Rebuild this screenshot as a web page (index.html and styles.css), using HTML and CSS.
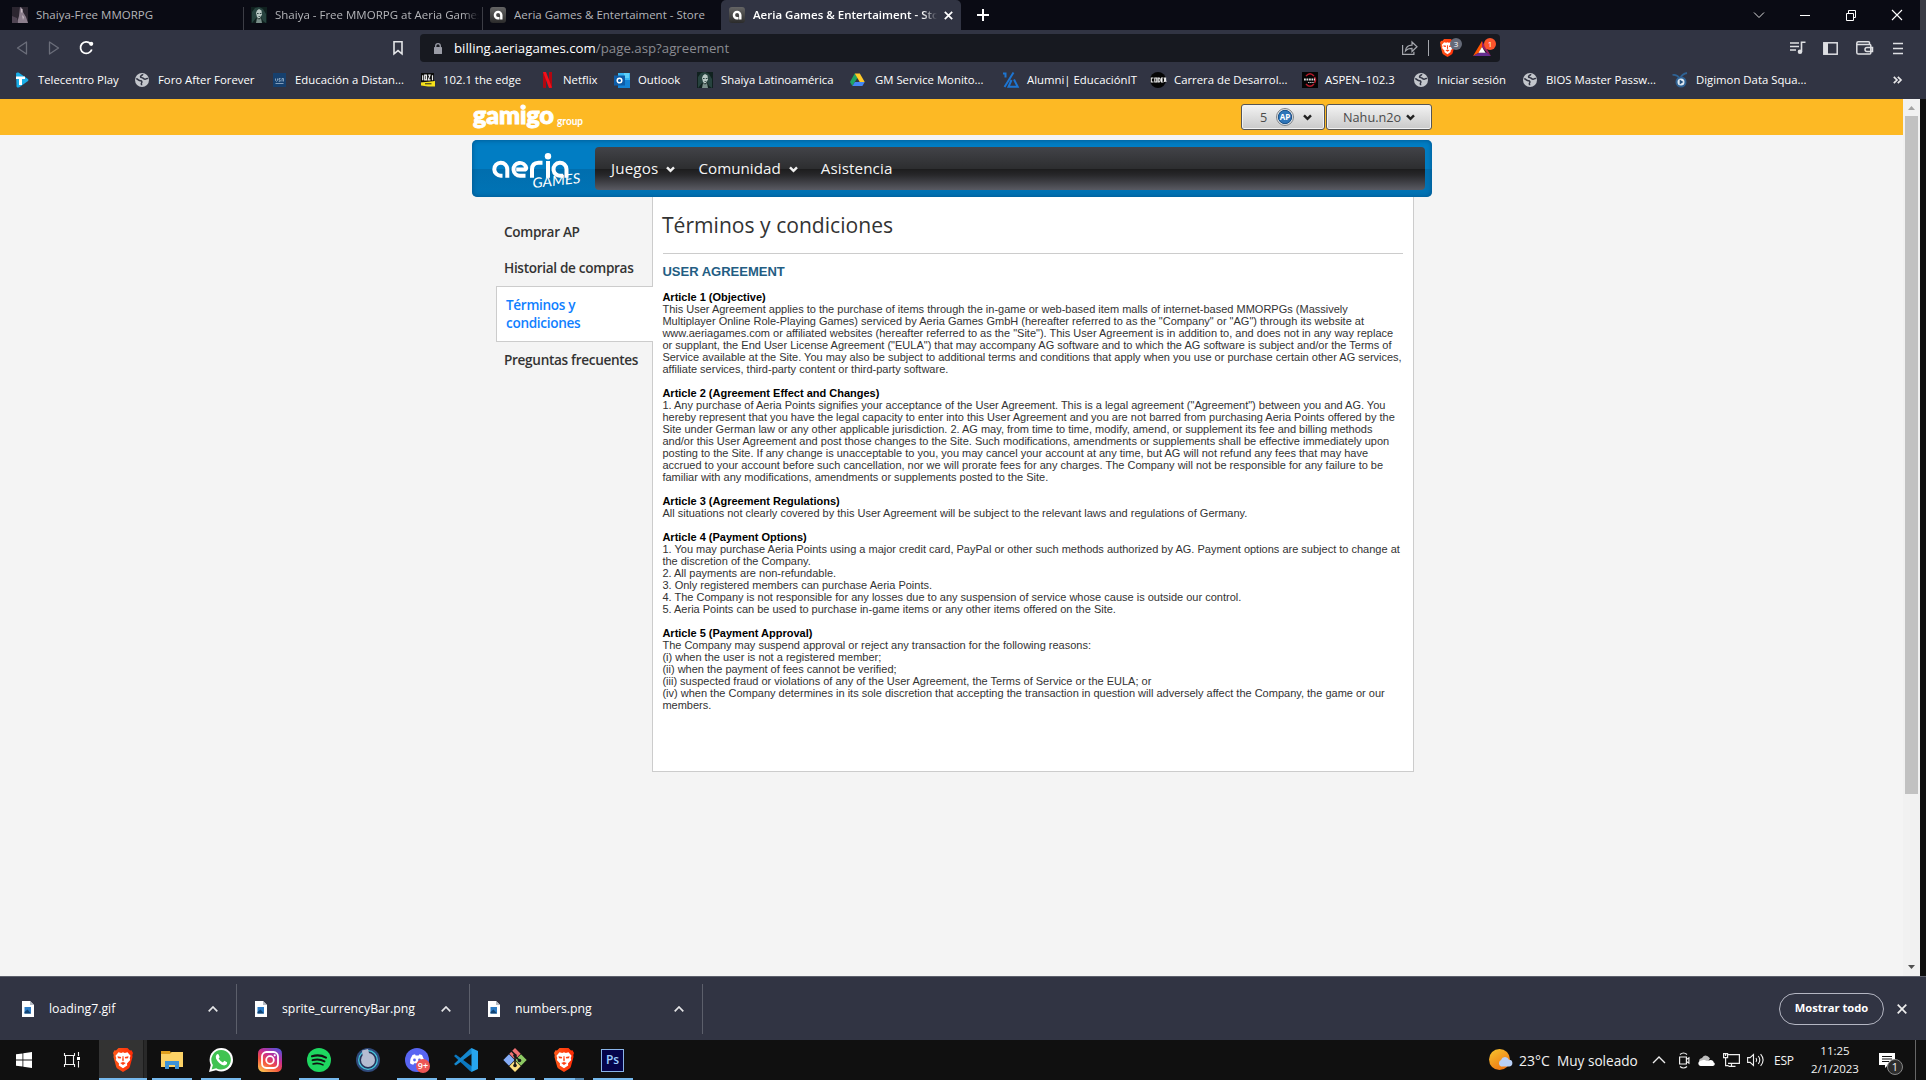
FILE: index.html
```html
<!DOCTYPE html>
<html lang="es">
<head>
<meta charset="utf-8">
<title>Aeria Games &amp; Entertaiment - Store</title>
<link rel="stylesheet" href="styles.css">
</head>
<body>
<svg class="defs" width="0" height="0" aria-hidden="true">
  <defs>
    <linearGradient id="gBrave" x1="0" x2="1"><stop offset="0" stop-color="#ff5a1a"/><stop offset="1" stop-color="#ff2a05"/></linearGradient>
    <linearGradient id="gInsta" x1="0.2" y1="1" x2="0.8" y2="0"><stop offset="0" stop-color="#fdc04f"/><stop offset=".35" stop-color="#f3503f"/><stop offset=".65" stop-color="#c52d93"/><stop offset="1" stop-color="#5a51d8"/></linearGradient>
    <linearGradient id="gSun" x1="0" y1="0" x2=".6" y2="1"><stop offset="0" stop-color="#f6c52f"/><stop offset="1" stop-color="#f07812"/></linearGradient>
    <linearGradient id="gTile" x2="0" y2="1"><stop offset="0" stop-color="#656565"/><stop offset="1" stop-color="#2b2b2b"/></linearGradient>
    <symbol id="brave" viewBox="0 0 20 24">
      <path fill="url(#gBrave)" d="M5.500 0h9l2.500 2.500 1.500-.2L20 5l-.7 2 .2 2-2.600 9.500q-.4 1.500-2 2.600L10 24l-4.900-2.900q-1.600-1.100-2-2.600L.5 9l.2-2L0 5l1.500-2.700 1.500.2z"/>
      <path fill="#fff" d="M5.500 4.200l2.700.7L10 4.300l1.800.6 2.700-.7 3 3.600-.8 2.200.5 2-3.200 3.600.2 1.800L10 20.200l-4.200-2.800.2-1.800L2.800 12l.5-2-.8-2.200z"/>
      <path fill="#ff4013" d="M4.500 8.200l3.700.8-.5 1.600-2.700-.4zM15.500 8.200l-3.700.8.5 1.600 2.700-.4zM9.600 8h.8l.4 4-.4 1.300h-.8L9.200 12zM7.200 15L10 13.900l2.800 1.100-2.800 2z"/>
    </symbol>
    <symbol id="globe" viewBox="0 0 14 14">
      <circle cx="7" cy="7" r="7" fill="#c3c6cc"/>
      <path fill="none" stroke="#313443" stroke-width="1.500" d="M1.200 5.800c2 .2 2.300 2 4.300 2 1.800 0 1.500 1.500 1 2.200-.6.700.2 1.500.2 2.300M7.800 1.200c-.2 1.500-2.500 1.200-2.300 2.600.2 1 1.600.6 2.500 1.300.8.700 2 1.600 3 .8.700-.6 1.500-.5 2-.3"/>
    </symbol>
    <symbol id="aeria" viewBox="0 0 16 16">
      <rect width="16" height="16" rx="3" fill="url(#gTile)"/>
      <path fill="none" stroke="#fff" stroke-width="2.400" d="M9.500 11.300H8A3.200 3.200 0 1 1 11.300 8v4.500"/>
    </symbol>
    <symbol id="portrait" viewBox="0 0 16 16">
      <rect width="16" height="16" fill="#10211f"/>
      <path fill="#27433f" d="M1 16V5l3-4 4-1 4 2 3 5v9l-3-2-2-4-5 1z"/>
      <path fill="#b9c8c4" d="M6 3.500L8 2l2.500 1.500.5 4-2 3.500-1.500.5L6 10 5 6z"/>
      <path fill="#2b4340" d="M6 6h1.600v1H6zM8.800 6h1.600v1H8.800zM7.500 9h1.800v.7H7.500z"/>
      <path fill="#798e89" d="M6 11l2 1.500L10 11l1 5H5z"/>
    </symbol>
    <symbol id="file" viewBox="0 0 12 16">
      <path fill="#fff" d="M0 0h8l4 4v12H0z"/><path fill="#b7bcc4" d="M8 0l4 4H8z"/>
      <path fill="#2d7cc5" d="M2.500 6h6.500v6.500H2.500z"/><path fill="#124474" d="M2.500 11l3-2.500 3.500 4H2.500z"/>
    </symbol>
    <symbol id="caret" viewBox="0 0 9 7"><path fill="none" stroke="currentColor" stroke-width="2.400" d="M1 1.300l3.500 3.600L8 1.300"/></symbol>
    <symbol id="up" viewBox="0 0 10 6"><path fill="none" stroke="currentColor" stroke-width="1.700" d="M.7 5.300L5 1l4.300 4.300"/></symbol>
  </defs>
</svg>

<div class="tabstrip">
  <div class="tab"><svg class="fav" viewBox="0 0 16 16"><rect width="16" height="16" fill="#2c2630"/><path fill="#8c7f8d" d="M8 0l2 1 1 4 3 5 2 6H5l2-7z"/><path fill="#504553" d="M0 9l5 2 1 5H0z"/><path fill="#c8bcc5" d="M9 2h1.500v3.500H9zM10 8l2 2-1 3z"/></svg><span>Shaiya-Free MMORPG</span></div>
  <div class="tab"><svg class="fav"><use href="#portrait"/></svg><span class="fade">Shaiya - Free MMORPG at Aeria Games</span></div>
  <div class="tab"><svg class="fav"><use href="#aeria"/></svg><span>Aeria Games &amp; Entertaiment - Store</span></div>
  <div class="tab active"><svg class="fav"><use href="#aeria"/></svg><span class="fade">Aeria Games &amp; Entertaiment - Store</span><svg class="tabx" viewBox="0 0 9 9"><path stroke="#fff" stroke-width="1.700" d="M.8.8l7.400 7.400M8.200.8L.8 8.200"/></svg></div>
  <svg class="plus" viewBox="0 0 12 12"><path stroke="#fff" stroke-width="2" d="M6 0v12M0 6h12"/></svg>
  <div class="winctl">
    <svg viewBox="0 0 12 12"><path fill="none" stroke="#ddd" d="M1 3.500l5 5 5-5"/></svg>
    <svg viewBox="0 0 12 12"><path stroke="#fff" d="M1 6.500h10"/></svg>
    <svg viewBox="0 0 12 12"><path fill="none" stroke="#fff" d="M1.500 4.500h7v7h-7zM3.500 4.500v-3h7v7h-2"/></svg>
    <svg viewBox="0 0 12 12"><path stroke="#fff" stroke-width="1.100" d="M1 1l10 10M11 1L1 11"/></svg>
  </div>
</div>

<div class="toolbar">
  <div class="navbtns">
    <svg width="12" height="16" viewBox="0 0 12 16"><path fill="none" stroke="#6b6e7a" stroke-width="1.300" stroke-linejoin="round" d="M10.500 2v12L1.500 8z"/></svg>
    <svg width="12" height="16" viewBox="0 0 12 16"><path fill="none" stroke="#6b6e7a" stroke-width="1.300" stroke-linejoin="round" d="M1.500 2v12l9-6z"/></svg>
    <svg width="15" height="16" viewBox="0 0 15 16"><path fill="none" stroke="#fff" stroke-width="1.800" d="M11.500 3.600A5.800 5.800 0 1 0 12.800 9.500"/><circle cx="12.200" cy="3.800" r="2.100" fill="#fff"/></svg>
  </div>
  <svg class="mark" viewBox="0 0 10 14"><path fill="none" stroke="#e4e5e8" stroke-width="1.600" d="M1 .8h8v12L5 9.600 1 12.800z"/></svg>
  <div class="urlbar">
    <svg class="lock" viewBox="0 0 8 11"><rect y="4" width="8" height="7" rx=".6" fill="#9a9ca6"/><path fill="none" stroke="#9a9ca6" stroke-width="1.300" d="M1.700 4.500V3a2.300 2.300 0 0 1 4.600 0v1.500"/></svg>
    <span class="url"><b>billing.aeriagames.com</b>/page.asp?agreement</span>
    <svg class="share" viewBox="0 0 16 14"><path fill="none" stroke="#a5a7ad" stroke-width="1.200" d="M.6 4v9.400h11.300v-2.600M3.500 9.800C4 6 6.500 4.200 10 4.200V1l5 4.800-5 4.700V7.400C7 7.300 5 8 3.500 9.800z"/></svg>
    <i class="sep"></i>
    <div class="shield"><svg viewBox="0 0 20 24"><use href="#brave"/></svg><em>3</em></div>
    <div class="bat"><svg viewBox="0 0 18 15"><path fill="#662d91" d="M0 15h18l-4-3.500H6z"/><path fill="#ff5500" d="M9 0L0 15l6-3.500L9 6z"/><path fill="#9e1f63" d="M9 0l9 15-4-3.500L9 6z"/><path fill="#fff" d="M9 6l3.500 5.700h-7z"/></svg><em>1</em></div>
  </div>
  <div class="tools">
    <svg width="17" height="14" viewBox="0 0 17 14"><path stroke="#dedfe3" stroke-width="1.500" d="M1 2h9M1 5.500h9M1 9h6"/><path fill="none" stroke="#dedfe3" stroke-width="1.600" d="M12.500 10.500V1.200h4"/><circle cx="11" cy="10.800" r="2.300" fill="#dedfe3"/></svg>
    <svg width="15" height="13" viewBox="0 0 15 13"><rect x=".8" y=".8" width="13.400" height="11.400" fill="none" stroke="#dedfe3" stroke-width="1.500"/><path fill="#dedfe3" d="M1 1h4v11H1z"/></svg>
    <svg width="17" height="14" viewBox="0 0 17 14"><path fill="none" stroke="#dedfe3" stroke-width="1.500" d="M13.500 3.500V1.800q0-1-1-1H2.300Q.8.800.8 2.300v9.200q0 1.600 1.600 1.600h11.400q1 0 1-1V4.600q0-1-1-1H1M16.500 6.500H11a1.900 1.900 0 0 0 0 4h5.500z"/></svg>
    <svg width="10" height="13" viewBox="0 0 10 13"><path stroke="#dedfe3" stroke-width="1.700" d="M0 1.500h10M0 6.500h10M0 11.500h10"/></svg>
  </div>
</div>

<div class="bookmarks">
  <div class="bm"><svg viewBox="0 0 16 16"><path fill="#19aee8" d="M1 1.500Q1.500 0 3.500.5L13 7q1 1 0 2L4 15.500Q1 16 1.500 13z"/><path fill="#fff" d="M1 4.500h9V7H7v6H4V7H1z"/></svg><span>Telecentro Play</span></div>
  <div class="bm"><svg class="g"><use href="#globe"/></svg><span>Foro After Forever</span></div>
  <div class="bm"><svg class="unt" viewBox="0 0 14 14"><rect width="13" height="14" fill="#16406e"/><path fill="none" stroke="#8fa9c4" stroke-width=".9" d="M2.500 5.500v2l1 .8 1-.8v-2M5.700 8.300h1.500V7H6V5.500h1.500M9 8.500v-3h1.500v3M2.500 10.500h8"/></svg><span>Educación a Distan...</span></div>
  <div class="bm"><svg class="edge" viewBox="0 0 14 14"><path fill="#0b0b0b" d="M0 0h13v9H0z"/><path fill="#f6e11a" d="M0 9.500l14-1.500v5.500H7L0 12.500z"/><path fill="none" stroke="#eee" stroke-width="1.200" d="M1.700 2.200v5M3.700 2.200h1.800v4.600H3.700zM7.200 2.200h1.800L7.300 6.800h2.200M11.500 2.200v5"/><path stroke="#222" d="M4 10.800h6.500"/></svg><span>102.1 the edge</span></div>
  <div class="bm"><svg viewBox="0 0 9 16"><path fill="#b20710" d="M0 0h3v16l-3-.3zM6 0h3v15.700L6 16z"/><path fill="#f3101b" d="M0 0h3l6 15.700L6 16z"/></svg><span>Netflix</span></div>
  <div class="bm"><svg viewBox="0 0 16 16"><path fill="#36b5f3" d="M4 1h12v8H4z"/><path fill="#1482d4" d="M4 8h12v8H4z"/><path fill="#5dd0fa" d="M10 1h5v5h-5z"/><path fill="#0e5ca8" d="M0 3.500h11v10H0z"/><circle cx="5.500" cy="8.500" r="2.300" fill="none" stroke="#fff" stroke-width="1.500"/></svg><span>Outlook</span></div>
  <div class="bm"><svg><use href="#portrait"/></svg><span>Shaiya Latinoamérica</span></div>
  <div class="bm"><svg viewBox="0 0 16 14"><path fill="#1fa463" d="M5 0L0 9l2.500 4.500L8 4.500z"/><path fill="#ffc928" d="M5 0h5.500l5.200 9h-5.300z"/><path fill="#4587f4" d="M5.200 9h10.500l-2.500 4.500H2.500z"/></svg><span>GM Service Monito...</span></div>
  <div class="bm"><svg viewBox="0 0 16 16"><path fill="none" stroke="#1d75d2" stroke-width="2" d="M10.500.5L1.500 15M0 1.500h2.500v4M8.500 8l-3 6.800h9.200L11 7.500"/></svg><span>Alumni| EducaciónIT</span></div>
  <div class="bm"><svg viewBox="0 0 16 16"><circle cx="8" cy="8" r="8" fill="#050505"/><path fill="none" stroke="#eee" stroke-width="1.100" d="M3.500 6H1.300v4h2.200M4.800 6h2v4h-2zM8.200 6h1q1 .3 1 2t-1 2h-1zM13.500 6h-2v4h2M11.500 8h1.500M14.600 10V6h1v2l.4 2"/></svg><span>Carrera de Desarrol...</span></div>
  <div class="bm"><svg viewBox="0 0 16 16"><rect width="16" height="16" fill="#050505"/><path fill="none" stroke="#b41a2a" stroke-width="1.500" d="M4 4q4-4.500 8 0M4 12q4 4.500 8 0M12.500 5q2 3 0 6"/><path stroke="#ddd" stroke-width="2" stroke-dasharray="1.800 .7" d="M2 7.500h11"/><path stroke="#bbb" stroke-dasharray="1.500 .6" d="M6 10.500h6"/></svg><span>ASPEN–102.3</span></div>
  <div class="bm"><svg class="g"><use href="#globe"/></svg><span>Iniciar sesión</span></div>
  <div class="bm"><svg class="g"><use href="#globe"/></svg><span>BIOS Master Passw...</span></div>
  <div class="bm"><svg viewBox="0 0 16 16"><path fill="none" stroke="#2f6294" stroke-width="1.800" d="M.5 3q4-1 7 3M8.500 6q1.500-4 6.500-5"/><circle cx="9" cy="10" r="4.500" fill="#dfe9f2" stroke="#2f6294" stroke-width="2"/><path fill="#24517f" d="M7.700 7.500l3.600 2.500-3.600 2.500z"/></svg><span>Digimon Data Squa...</span></div>
  <svg class="more" viewBox="0 0 9 8"><path fill="none" stroke="#e8e8ea" stroke-width="1.700" d="M.8.800L4 4 .8 7.200M4.800.800L8 4 4.800 7.200"/></svg>
</div>

<div class="viewport">
  <div class="page">
    <div class="topbar">
      <div class="topinner">
        <svg class="gamigo" width="112" height="30" viewBox="0 0 112 30"><text class="lg" x="0" y="19.500" textLength="81" lengthAdjust="spacingAndGlyphs">gamigo</text><text class="lgs" x="84" y="21" textLength="26" lengthAdjust="spacingAndGlyphs">group</text></svg>
        <div class="userbtns">
          <div class="btn points"><span>5</span><svg class="ap" viewBox="0 0 18 18"><circle cx="9" cy="9" r="8.500" fill="#e6e8ea" stroke="#808488"/><circle cx="9" cy="9" r="6.700" fill="#2e75b9" stroke="#174f86"/><text x="9" y="12" text-anchor="middle">AP</text></svg><svg class="caret"><use href="#caret"/></svg></div>
          <div class="btn user"><span>Nahu.n2o</span><svg class="caret"><use href="#caret"/></svg></div>
        </div>
      </div>
    </div>
    <div class="wrap">
      <div class="mainnav">
        <svg class="logo" width="123" height="57" viewBox="0 0 123 57"><g fill="none" stroke="#fff" stroke-width="4"><path d="M30.500 35.700h-1.500a6.500 6.500 0 1 1 6.300-6.500v8.600"/><path d="M53.500 35.700h-5.500a6.400 6.400 0 1 1 6.200-7.700q-.2 1.600-2 1.600h-8"/><path d="M60 37.800V29.500q0-6.500 6.500-6.700h4"/><path d="M76 21v16.800"/><path d="M91 35.700h-2a6.500 6.500 0 1 1 5.500-6.500v8.600"/></g><circle cx="76" cy="16.200" r="3.200" fill="#fff"/><text class="games" x="61" y="48" textLength="48" lengthAdjust="spacingAndGlyphs" transform="rotate(-6 61 48)">GAMES</text></svg>
        <nav class="menu"><span class="m1">Juegos</span><svg class="caret"><use href="#caret"/></svg><span class="m2">Comunidad</span><svg class="caret"><use href="#caret"/></svg><span class="m3">Asistencia</span></nav>
      </div>
      <div class="cols">
        <aside>
          <a>Comprar AP</a>
          <a class="s2">Historial de compras</a>
          <a class="cur">Términos y<br>condiciones</a>
          <a class="s4">Preguntas frecuentes</a>
        </aside>
        <main>
          <h1><span>Términos y condiciones</span></h1>
          <h2>USER AGREEMENT</h2>
          <div class="legal"><b>Article 1 (Objective)</b><br>This User Agreement applies to the purchase of items through the in-game or web-based item malls of internet-based MMORPGs (Massively<br>Multiplayer Online Role-Playing Games) serviced by Aeria Games GmbH (hereafter referred to as the "Company" or "AG") through its website at<br>www.aeriagames.com or affiliated websites (hereafter referred to as the "Site"). This User Agreement is in addition to, and does not in any way replace<br>or supplant, the End User License Agreement ("EULA") that may accompany AG software and to which the AG software is subject and/or the Terms of<br>Service available at the Site. You may also be subject to additional terms and conditions that apply when you use or purchase certain other AG services,<br>affiliate services, third-party content or third-party software.<br><br><b>Article 2 (Agreement Effect and Changes)</b><br>1. Any purchase of Aeria Points signifies your acceptance of the User Agreement. This is a legal agreement ("Agreement") between you and AG. You<br>hereby represent that you have the legal capacity to enter into this User Agreement and you are not barred from purchasing Aeria Points offered by the<br>Site under German law or any other applicable jurisdiction. 2. AG may, from time to time, modify, amend, or supplement its fee and billing methods<br>and/or this User Agreement and post those changes to the Site. Such modifications, amendments or supplements shall be effective immediately upon<br>posting to the Site. If any change is unacceptable to you, you may cancel your account at any time, but AG will not refund any fees that may have<br>accrued to your account before such cancellation, nor we will prorate fees for any charges. The Company will not be responsible for any failure to be<br>familiar with any modifications, amendments or supplements posted to the Site.<br><br><b>Article 3 (Agreement Regulations)</b><br>All situations not clearly covered by this User Agreement will be subject to the relevant laws and regulations of Germany.<br><br><b>Article 4 (Payment Options)</b><br>1. You may purchase Aeria Points using a major credit card, PayPal or other such methods authorized by AG. Payment options are subject to change at<br>the discretion of the Company.<br>2. All payments are non-refundable.<br>3. Only registered members can purchase Aeria Points.<br>4. The Company is not responsible for any losses due to any suspension of service whose cause is outside our control.<br>5. Aeria Points can be used to purchase in-game items or any other items offered on the Site.<br><br><b>Article 5 (Payment Approval)</b><br>The Company may suspend approval or reject any transaction for the following reasons:<br>(i) when the user is not a registered member;<br>(ii) when the payment of fees cannot be verified;<br>(iii) suspected fraud or violations of any of the User Agreement, the Terms of Service or the EULA; or<br>(iv) when the Company determines in its sole discretion that accepting the transaction in question will adversely affect the Company, the game or our<br>members.</div>
        </main>
      </div>
    </div>
  </div>
  <div class="scroll"><svg viewBox="0 0 7 4"><path fill="#a3a3a3" d="M0 4l3.500-4L7 4z"/></svg><i></i><svg viewBox="0 0 7 4"><path fill="#505050" d="M0 0l3.500 4L7 0z"/></svg></div>
</div>

<div class="downloads">
  <div class="dl"><svg class="file"><use href="#file"/></svg><span>loading7.gif</span><svg class="up"><use href="#up"/></svg></div>
  <div class="dl"><svg class="file"><use href="#file"/></svg><span>sprite_currencyBar.png</span><svg class="up"><use href="#up"/></svg></div>
  <div class="dl"><svg class="file"><use href="#file"/></svg><span>numbers.png</span><svg class="up"><use href="#up"/></svg></div>
  <div class="showall">Mostrar todo</div>
  <svg class="dlx" viewBox="0 0 10 10"><path stroke="#eee" stroke-width="1.700" d="M.7.700l8.600 8.600M9.300.700L.7 9.300"/></svg>
</div>

<div class="taskbar">
  <div class="sys"><svg width="16" height="16" viewBox="0 0 16 16"><path fill="#fff" d="M0 2.300l6.500-.9v6.100H0zM7.300 1.300L16 0v7.500H7.300zM0 8.400h6.500v6.200L0 13.700zM7.300 8.400H16V16l-8.700-1.200z"/></svg></div>
  <div class="sys two"><svg width="16" height="16" viewBox="0 0 16 16"><path fill="none" stroke="#f2f2f2" stroke-width="1.100" d="M.5 1v2.500h10V1M.5 15v-2.500h10V15M1.500 4v8M9.500 4v8M14.500 0v4M14.500 9v6.500"/><path fill="#fff" d="M13 5h3v3h-3z"/></svg></div>
  <div class="app focus"><svg width="20" height="24"><use href="#brave"/></svg></div>
  <div class="app run first"><svg width="24" height="24" viewBox="0 0 24 24"><path fill="#e0a01e" d="M1 3h9l1 2v4H1z"/><path fill="#fcd266" d="M1 6h9l1.500-2H23v15H1z"/><path fill="#3d93d8" d="M5 13h14v8h-4v-4H9v4H5z"/></svg></div>
  <div class="app run"><svg width="24" height="24" viewBox="0 0 24 24"><circle cx="12.300" cy="11.700" r="11.700" fill="#fff"/><path fill="#fff" d="M0 24l2-8 6 6z"/><path fill="#40c351" d="M12.300 1.900a9.800 9.800 0 0 0-8.400 15L2.600 21.400l4.600-1.200A9.800 9.800 0 1 0 12.300 1.900z"/><path fill="#fff" d="M7.700 6.500q1.300-1 2 .2l.9 2.200q0 .6-1 1.600 1.500 2.800 4.300 3.900l1.400-1.600 2.800 1.400q.3 2.800-3 3.200Q10 16.800 7 10.600q-.7-2.600.7-4.100z"/></svg></div>
  <div class="app"><svg width="24" height="24" viewBox="0 0 24 24"><rect width="24" height="24" rx="5.500" fill="url(#gInsta)"/><rect x="4" y="4" width="16" height="16" rx="4.500" fill="none" stroke="#fff" stroke-width="1.800"/><circle cx="12" cy="12" r="3.800" fill="none" stroke="#fff" stroke-width="1.800"/><circle cx="16.700" cy="7.300" r="1.100" fill="#fff"/></svg></div>
  <div class="app run"><svg width="24" height="24" viewBox="0 0 24 24"><circle cx="12" cy="12" r="12" fill="#1ed760"/><path fill="none" stroke="#111" stroke-linecap="round" stroke-width="2.200" d="M5 8.300q7.500-2.200 14 1.300"/><path fill="none" stroke="#111" stroke-linecap="round" stroke-width="1.900" d="M5.500 12.200q6.500-1.800 12 1.200"/><path fill="none" stroke="#111" stroke-linecap="round" stroke-width="1.600" d="M6 15.900q5.500-1.500 10 1"/></svg></div>
  <div class="app"><svg width="24" height="24" viewBox="0 0 24 24"><circle cx="12" cy="12" r="12" fill="#2f4a7c"/><circle cx="12" cy="12" r="9.300" fill="#26335a" stroke="#47c6dc" stroke-width="1.300"/><circle cx="12" cy="12" r="7" fill="#b5bdd2"/><path fill="#b5bdd2" d="M6 2.500L12 1l1.500 6L7 10z"/></svg></div>
  <div class="app run"><svg width="24" height="24" viewBox="0 0 24 24"><circle cx="12" cy="12" r="12" fill="#5865f2"/><path fill="#fff" d="M7.500 7l2.500-.8.7 1.200h3l.7-1.200L17 7q2.300 3.500 2 8.300-1.500 1.200-3.300 1.500l-.9-1.500H9.200l-.9 1.500Q6.500 16.500 5 15.300 4.800 10.500 7.500 7z"/><circle cx="9.500" cy="12" r="1.400" fill="#5865f2"/><circle cx="14.500" cy="12" r="1.400" fill="#5865f2"/></svg><em class="nine">9+</em></div>
  <div class="app run"><svg width="24" height="24" viewBox="0 0 24 24"><path fill="#0b78c0" d="M0 8l1.800-1.600L18 18.500V24l-2-1z"/><path fill="#1588cf" d="M0 16l1.800 1.600L18 5.500V0l-2 1z"/><path fill="#27a5ee" d="M17.500 0L24 3v18l-6.500 3z"/></svg></div>
  <div class="app run"><svg width="24" height="24" viewBox="0 0 24 24"><path fill="#f07173" d="M12 0l5.700 5.700L12 11.400 6.300 5.700z"/><path fill="#86adf7" d="M6 6.300l5.700 5.700L6 17.700.3 12z"/><path fill="#8dc963" d="M18 6.300l5.700 5.700-5.700 5.700-5.700-5.700z"/><path fill="#fbde80" d="M12 12.600l5.700 5.700L12 24l-5.700-5.700z"/><path stroke="#181818" stroke-width="1.600" fill="none" d="M8 2.500l4 4v12M12 8l5 5"/><circle cx="12" cy="7.500" r="1.800" fill="#181818"/><circle cx="12" cy="17.500" r="1.800" fill="#181818"/><circle cx="16.500" cy="12.500" r="1.800" fill="#181818"/></svg></div>
  <div class="app run multi"><svg width="20" height="24"><use href="#brave"/></svg></div>
  <div class="app run"><div class="ps">Ps</div></div>
  <div class="tray">
    <svg class="sun" viewBox="0 0 24 22"><circle cx="10.500" cy="10.500" r="10.500" fill="url(#gSun)"/><path fill="#b9d0f7" d="M12 17.500a3.700 3.700 0 0 1 0-6.600 4.300 4.300 0 0 1 8-.2 3.400 3.400 0 0 1 0 6.800z"/></svg>
    <span class="wx t">23°C</span><span class="wx2 t">Muy soleado</span>
    <svg class="i1" width="14" height="8" viewBox="0 0 14 8"><path fill="none" stroke="#eee" stroke-width="1.400" d="M1 7l6-6 6 6"/></svg>
    <svg class="i2" width="12" height="17" viewBox="0 0 12 17"><path fill="none" stroke="#eee" stroke-width="1.200" d="M2 2.500q3.500-3 7 0M2 14.500q3.500 3 7 0M1.600 5h6.800v7H1.600zM8.400 7.500l2.500-1.700v5.400L8.400 9.500"/></svg>
    <svg class="i3" width="17" height="11" viewBox="0 0 17 11"><path fill="#bdbdbd" d="M2 8Q-.5 4 4 3q3.500-5 8 .3L9 8z"/><path fill="#fff" d="M2.500 11a2.600 2.600 0 0 1-.5-5l4-1.200L9 6l3.500-1q3 .2 3 2.200 1.500.7 1.300 2-.3 1.800-2 1.800z"/></svg>
    <svg class="i4" width="17" height="14" viewBox="0 0 17 14"><path fill="none" stroke="#eee" stroke-width="1.200" d="M5 1.600h11.400v8.800H5M.6.600h4v4h-4zM2.600 4.600v8h3M8.500 10.500v2.900M5.500 13.400h7M2.600 1v2"/></svg>
    <svg class="i5" width="17" height="14" viewBox="0 0 17 14"><path fill="none" stroke="#eee" stroke-width="1.100" d="M.6 4.600h2.500L6.500 1.500v11L3.100 9.400H.6zM9 5q1.400 2 0 4M11.300 3q3 4 0 8M13.600 1.200q5 5.800 0 11.600"/></svg>
    <span class="esp t">ESP</span>
    <div class="clock t"><span>11:25</span><span>2/1/2023</span></div>
    <div class="notif"><svg width="16" height="15" viewBox="0 0 16 15"><path fill="#fff" d="M0 0h16v12H9l-3 3v-3H0z"/><path stroke="#111" stroke-width="1.200" d="M3 3.500h10M3 6h10M3 8.500h7"/></svg><em>1</em></div>
    <i class="peek"></i>
  </div>
</div>
</body>
</html>
```
FILE: styles.css
```css
* { box-sizing: border-box; }
body { margin: 0; width: 1926px; height: 1080px; overflow: hidden; background: #0e0e0e; font-family: "Open Sans", "Noto Sans", sans-serif; display: flex; flex-direction: column; }
svg { display: block; flex: none; overflow: visible; }
span { white-space: nowrap; }
em { font-style: normal; }
.defs { position: absolute; }

.tabstrip { height: 30px; flex: none; background: #0a0b14; display: flex; align-items: center; border-right: 6px solid #3b3c45; color: #b4b5b9; font-size: 11.5px; }
.tab { width: 239px; height: 30px; display: flex; align-items: center; padding-left: 12px; position: relative; flex: none; }
.tab:nth-child(1), .tab:nth-child(2) { background: linear-gradient(#3c3d45, #3c3d45) right 7px / 1px 23px no-repeat; }
.tab:nth-child(1) { width: 244px; }
.tab:nth-child(2) { padding-left: 7px; }
.tab:nth-child(3) { padding-left: 7px; width: 238px; }
.tab span { margin-left: 8px; overflow: hidden; padding-bottom: 2px; }
.fav { width: 16px; height: 16px; }
.tab .fade { width: 204px; -webkit-mask-image: linear-gradient(90deg, #000 92%, transparent); mask-image: linear-gradient(90deg, #000 92%, transparent); }
.tab.active { width: 240px; padding-left: 8px; background: #313443; border-radius: 5px 5px 0 0; color: #fff; font-weight: 600; }
.tab.active .fade { width: 184px; }
.tabx { width: 9px; height: 9px; margin-left: 7px; }
.plus { width: 12px; height: 12px; margin-left: 16px; }
.winctl { margin-left: auto; margin-right: 17px; display: flex; gap: 34px; padding-bottom: 1px; }
.winctl svg { width: 12px; height: 12px; }

.toolbar { height: 36px; flex: none; background: #313443; display: flex; align-items: center; }
.navbtns { display: flex; width: 392px; padding-left: 16px; gap: 19.500px; align-items: center; }
.mark { width: 10px; height: 14px; margin-left: 1px; }
.urlbar { margin-left: 17px; width: 1080px; height: 28px; background: #171920; border-radius: 4px; display: flex; align-items: center; }
.lock { width: 8px; height: 11px; margin-left: 14px; }
.url { margin-left: 12px; width: 948px; font-size: 13.250px; color: #8a8b91; }
.url b { font-weight: 400; color: #fff; }
.share { width: 16px; height: 14px; }
.sep { width: 1px; height: 16px; margin-left: 10px; background: #a5a7ad; }
.shield, .bat { position: relative; }
.shield { margin-left: 11px; }
.shield svg { width: 15px; height: 18px; }
.bat { margin-left: 18px; }
.bat svg { width: 18px; height: 15px; }
.shield em, .bat em { position: absolute; left: 10px; top: -1px; width: 12px; height: 12px; border-radius: 6px; background: #656a78; color: #fff; font-size: 8px; line-height: 12px; text-align: center; }
.bat em { background: #fb542b; left: 11px; top: -3px; }
.tools { margin-left: 289px; display: flex; align-items: center; width: 114px; }
.tools svg:nth-child(2) { margin-left: 17px; }
.tools svg:nth-child(3) { margin-left: 18px; }
.tools svg:nth-child(4) { margin-left: 20px; }

.bookmarks { height: 33px; flex: none; background: #313443; padding: 0 0 5px 15px; display: flex; align-items: center; color: #fff; font-size: 11.350px; }
.bm { display: flex; align-items: center; gap: 7px; flex: none; }
.bm span { padding-bottom: 1px; }
.bm svg { width: 16px; height: 16px; }
.bm svg.g { width: 14px; height: 14px; margin-right: 2px; }
.bm svg.unt, .bm svg.edge { width: 14px; height: 14px; margin-right: 1px; }
.bm:nth-child(1) { width: 120px; } .bm:nth-child(2) { width: 138px; } .bm:nth-child(3) { width: 148px; }
.bm:nth-child(4) { width: 121px; } .bm:nth-child(5) { width: 72px; } .bm:nth-child(6) { width: 83px; }
.bm:nth-child(7) { width: 153px; } .bm:nth-child(8) { width: 153px; gap: 10px; } .bm:nth-child(9) { width: 147px; gap: 8px; }
.bm:nth-child(10) { width: 152px; gap: 8px; } .bm:nth-child(11) { width: 112px; } .bm:nth-child(12) { width: 109px; }
.bm:nth-child(13) { width: 149px; } .bm:nth-child(14) { width: 221px; gap: 8px; }
.bm:nth-child(5) svg { width: 9px; margin: 0 4px 0 1px; }
.bm:nth-child(6) { gap: 8px; } .bm:nth-child(7) { gap: 8px; }
.bm:nth-child(8) svg { width: 15px; height: 14px; }
.more { width: 9px; height: 8px; }

.viewport { height: 877px; flex: none; width: 1920px; display: flex; }
.page { width: 1903px; background: #f4f4f4; }
.topbar { height: 36px; background: #fdb924; padding-left: 472px; }
.topinner { width: 960px; display: flex; justify-content: space-between; padding-top: 5px; }
.gamigo { margin-left: 1px; }
.lg { font: 900 24px "Lato", sans-serif; fill: #fff; stroke: #fff; stroke-width: 1px; }
.lgs { font: 700 11px "Lato", sans-serif; fill: #fff; }
.userbtns { display: flex; gap: 1px; }
.btn { height: 26px; border: 1px solid #555; border-radius: 3px; background: linear-gradient(#f3f3f3, #c9c9c9); box-shadow: inset 0 0 0 1px #f2f2f2; display: flex; align-items: center; font-size: 12.700px; color: #4a4a4a; }
.caret { width: 9px; height: 7px; color: #222; }
.points { width: 84px; padding-left: 18px; }
.ap { width: 18px; height: 18px; margin: 0 9px; }
.ap text { font: 700 8px "Open Sans", sans-serif; fill: #fff; }
.user { width: 106px; padding-left: 16px; justify-content: space-between; padding-right: 16px; }

.wrap { width: 960px; margin: 5px 0 0 472px; }
.mainnav { height: 57px; border-radius: 5px; display: flex; background: linear-gradient(#017dc3 0, #017dc3 50%, #016eae 51%, #0074b6 100%); box-shadow: inset 0 0 5px #00528a; }
.games { font: italic 400 14px "Lato", sans-serif; fill: #fff; }
.menu { width: 830px; height: 43px; margin-top: 7px; border-radius: 4px; display: flex; align-items: center; padding: 0 0 1px 16px; background: linear-gradient(#424348 0, #2d2e30 50%, #1d1d1e 52%, #27272a 65%, #595a62 100%); color: #f4f4f4; font-size: 15.200px; }
.menu .caret { color: #f0f0f0; margin: 2px 23px 0 8px; }
.m1 { letter-spacing: .15px; }
.m3 { letter-spacing: .1px; }
.cols { display: flex; padding-left: 24px; align-items: flex-start; }
aside { width: 156px; padding-top: 26px; display: flex; flex-direction: column; position: relative; z-index: 1; color: #333; font-size: 13.600px; letter-spacing: -.32px; font-weight: 600; line-height: 18px; flex: none; }
aside a { padding-left: 8px; height: 23px; white-space: nowrap; }
aside .s2 { margin-top: 13px; height: 27px; }
aside .cur { height: 56px; width: 157px; background: #fff; border: 1px solid #ccc; border-right: 0; padding: 9px 0 0 9px; color: #1080ff; }
aside .s4 { margin-top: 9px; }
main { width: 762px; height: 575px; background: #fff; border: 1px solid #ccc; border-top: 0; padding: 0 10px; }
h1 { margin: 0; height: 57px; border-bottom: 1px solid #ccc; font-weight: 400; font-size: 21.100px; line-height: 56px; color: #333; }
h2 { margin: 10px 0 11px -.6px; font: 700 13px/16px "Liberation Sans", Arial, sans-serif; color: #235d83; }
.legal { margin-left: -.6px; font: 11px/12px "Liberation Sans", Arial, sans-serif; color: #333; white-space: nowrap; }
.legal b { color: #000; }
h1 span { margin-left: -1px; }
.scroll { width: 17px; background: #f1f1f1; display: flex; flex-direction: column; align-items: center; padding: 7px 0; }
.scroll svg { width: 7px; height: 4px; }
.scroll i { width: 13px; height: 678px; background: #c1c1c1; margin: 6px 0 auto; }

.downloads { height: 64px; flex: none; background: #313443; border-top: 1px solid #5c5f6b; display: flex; align-items: center; color: #fff; font-size: 12.300px; }
.dl { width: 233px; height: 50px; border-right: 1px solid #5c5f6b; display: flex; align-items: center; padding: 0 18px; }
.dl:first-child { width: 237px; padding-left: 22px; }
.dl span { padding-bottom: 1px; }
.file { width: 12px; height: 16px; margin-right: 15px; }
.dl .up { width: 10px; height: 6px; margin-left: auto; color: #e6e6e8; }
.showall { margin-left: auto; width: 105px; height: 32px; border: 1px solid #b4b6c2; border-radius: 16px; line-height: 28px; text-align: center; font-weight: 700; font-size: 11.200px; }
.dlx { width: 10px; height: 10px; margin: 0 19px 0 13px; }

.taskbar { height: 40px; flex: none; background: #101010; display: flex; }
.sys { width: 48px; display: flex; align-items: center; justify-content: center; }
.two { width: 51px; padding-right: 4px; }
.app { width: 40px; height: 40px; margin-right: 9px; display: flex; align-items: center; justify-content: center; position: relative; flex: none; }
.run { border-bottom: 2px solid #76b9ed; padding-top: 2px; }
.focus { width: 48px; margin-right: 5px; background: linear-gradient(90deg, #333 44px, #1d1d1d 44px, #1d1d1d 45px, #292929 45px); border-bottom: 2px solid #76b9ed; padding-top: 2px; }
.focus svg { margin-right: 1px; }
.multi::after { content: ""; position: absolute; right: 0; bottom: -2px; width: 9px; height: 2px; background: #4f82ab; }
.nine { position: absolute; left: 19px; top: 19px; width: 14px; height: 14px; border-radius: 7px; background: #ed5555; color: #fff; font-size: 9px; font-weight: 600; line-height: 14px; text-align: center; }
.ps { width: 23px; height: 23px; margin-right: 1px; border: 1px solid #8ab4e8; background: #05044a; color: #9fd0ff; font-size: 12px; font-weight: 600; line-height: 20px; text-align: center; }
.tray { margin-left: auto; display: flex; align-items: center; color: #f2f2f2; }
.t { font-size: 11.500px; }
.sun { width: 24px; height: 22px; margin-right: 6px; }
.wx, .wx2 { font-size: 13.600px; }
.wx { width: 38px; font-size: 14px; } .wx2 { width: 95px; }
.i2 { margin-left: 12px; } .i3 { margin-left: 8px; } .i4 { margin-left: 8px; } .i5 { margin-left: 7px; }
.esp { margin-left: 10px; width: 21px; letter-spacing: -.2px; }
.clock { width: 80px; display: flex; flex-direction: column; align-items: center; line-height: 18px; padding-bottom: 1px; }
.esp { font-size: 12px; }
.notif { position: relative; margin-left: 4px; width: 36px; }
.notif em { position: absolute; left: 8px; top: 6px; width: 16px; height: 16px; border-radius: 8px; border: 1px solid #888; background: #2d2d2d; font-size: 11px; line-height: 14px; text-align: center; }
.peek { width: 1px; height: 40px; margin-right: 10px; background: #666; }
```
